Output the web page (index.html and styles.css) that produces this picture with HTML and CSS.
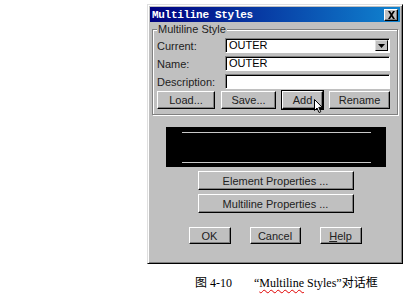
FILE: index.html
```html
<!DOCTYPE html>
<html>
<head>
<meta charset="utf-8">
<link rel="stylesheet" href="styles.css">
</head>
<body>
<div class="page">
  <div class="dialog">
    <div class="titlebar">
      <span class="title">Multiline Styles</span>
      <span class="close">
        <svg width="9" height="8" viewBox="0 0 9 8"><path d="M1 0h2l1.5 2.5L6 0h2L5.5 4 8 8H6L4.5 5.5 3 8H1l2.5-4z" fill="#000"/></svg>
      </span>
    </div>
    <div class="group">
      <div class="legend">Multiline Style</div>
      <div class="row">
        <span class="label">Current:</span>
        <div class="field combo"><span>OUTER</span>
          <span class="drop"><svg width="7" height="4" viewBox="0 0 7 4"><path d="M0 0h7L3.5 4z" fill="#000"/></svg></span>
        </div>
      </div>
      <div class="row">
        <span class="label">Name:</span>
        <div class="field"><span>OUTER</span></div>
      </div>
      <div class="row">
        <span class="label">Description:</span>
        <div class="field"></div>
      </div>
      <div class="btnrow">
        <div class="btn w-load">Load...</div>
        <div class="btn w-save">Save...</div>
        <div class="btn w-add focus">Add
          <svg class="cursor" width="9" height="14" viewBox="0 0 9 14"><path d="M0.5 0.5v11l2.5-2.5 2 4.5 1.8-0.8-2-4.3h3.5z" fill="#fff" stroke="#000" stroke-width="1"/></svg>
        </div>
        <div class="btn w-rename">Rename</div>
      </div>
    </div>
    <div class="preview">
      <div class="pline"></div>
      <div class="pline"></div>
    </div>
    <div class="props">
      <div class="btn wide">Element Properties ...</div>
      <div class="btn wide">Multiline Properties ...</div>
    </div>
    <div class="footer">
      <div class="btn w-ok">OK</div>
      <div class="btn w-cancel">Cancel</div>
      <div class="btn w-help"><u>H</u>elp</div>
    </div>
  </div>
  <div class="caption">图 4-10<span class="gap"></span>“<span class="wavy">Multiline</span> Styles”对话框</div>
</div>
</body>
</html>
```

FILE: styles.css
```css
html, body {
  margin: 0;
  padding: 0;
  background: #fff;
}
.page {
  width: 405px;
  height: 295px;
  padding: 4px 0 0 147px;
  box-sizing: border-box;
  font-family: "Liberation Sans", Arial, sans-serif;
}
.dialog {
  width: 256px;
  height: 260px;
  box-sizing: border-box;
  background: #c0c0c0;
  border-top: 1px solid #dfdfdf;
  border-left: 1px solid #dfdfdf;
  border-right: 1px solid #000;
  border-bottom: 1px solid #000;
  box-shadow: inset 1px 1px 0 #fff, inset -1px -1px 0 #808080;
  padding: 2px;
  display: flex;
  flex-direction: column;
}
.titlebar {
  height: 15px;
  background: linear-gradient(to right, #000080, #1084d0);
  display: flex;
  align-items: center;
  justify-content: space-between;
  padding: 0 2px 0 2px;
}
.title {
  color: #fff;
  font-family: "Liberation Mono", "DejaVu Sans Mono", monospace;
  font-weight: bold;
  font-size: 11px;
  letter-spacing: -0.3px;
}
.close {
  width: 14px;
  height: 12px;
  box-sizing: border-box;
  background: #c0c0c0;
  border-top: 1px solid #fff;
  border-left: 1px solid #fff;
  border-right: 1px solid #000;
  border-bottom: 1px solid #000;
  box-shadow: inset -1px -1px 0 #808080;
  display: flex;
  align-items: center;
  justify-content: center;
}
.group {
  margin: 7px 2px 0 2px;
  height: 86px;
  box-sizing: border-box;
  border: 1px solid #808080;
  box-shadow: 1px 1px 0 #fff, inset 1px 1px 0 #fff;
  position: relative;
  padding: 8px 7px 0 4px;
  display: flex;
  flex-direction: column;
}
.legend {
  position: absolute;
  top: -7px;
  left: 4px;
  background: #c0c0c0;
  padding: 0 1px;
  font-size: 11px;
  color: #222;
  line-height: 12px;
}
.row {
  display: flex;
  align-items: center;
  justify-content: space-between;
  height: 15px;
  margin-bottom: 3px;
}
.label {
  font-size: 11px;
  color: #222;
}
.field {
  width: 165px;
  height: 15px;
  box-sizing: border-box;
  background: #fff;
  border-top: 1px solid #808080;
  border-left: 1px solid #808080;
  border-right: 1px solid #fff;
  border-bottom: 1px solid #fff;
  box-shadow: inset 1px 1px 0 #000;
  font-size: 11px;
  line-height: 13px;
  padding-left: 3px;
  color: #000;
  display: flex;
  justify-content: space-between;
  align-items: center;
}
.drop {
  width: 13px;
  height: 11px;
  margin-right: 1px;
  box-sizing: border-box;
  background: #c0c0c0;
  border-top: 1px solid #dfdfdf;
  border-left: 1px solid #dfdfdf;
  border-right: 1px solid #000;
  border-bottom: 1px solid #000;
  display: flex;
  align-items: center;
  justify-content: center;
}
.btnrow {
  display: flex;
  justify-content: space-between;
  margin-top: -1px;
}
.btn {
  height: 18px;
  box-sizing: border-box;
  background: #c0c0c0;
  border-top: 1px solid #fff;
  border-left: 1px solid #fff;
  border-right: 1px solid #000;
  border-bottom: 1px solid #000;
  box-shadow: inset -1px -1px 0 #808080;
  font-size: 11px;
  color: #222;
  display: flex;
  align-items: center;
  justify-content: center;
  position: relative;
}
.btn.focus {
  outline: 1px solid #000;
}
.cursor {
  position: absolute;
  left: 31px;
  top: 7px;
}
.w-load { width: 58px; }
.w-save { width: 55px; }
.w-add { width: 41px; }
.w-rename { width: 61px; }
.preview {
  margin: 12px 14px 0 16px;
  height: 40px;
  background: #000;
  display: flex;
  flex-direction: column;
  justify-content: space-between;
  padding: 5px 15px 4px 16px;
  box-sizing: border-box;
}
.pline {
  height: 1px;
  background: #c8c8c8;
}
.props {
  display: flex;
  flex-direction: column;
  align-items: center;
  gap: 4px;
  margin-top: 4px;
  padding-left: 0;
}
.btn.wide {
  width: 156px;
  height: 19px;
  margin-left: 1px;
}
.footer {
  display: flex;
  justify-content: center;
  gap: 19px;
  margin-top: 14px;
}
.footer .btn {
  height: 17px;
}
.w-ok { width: 42px; }
.w-cancel { width: 51px; }
.w-help { width: 42px; }
.caption {
  margin: 12px 0 0 48px;
  font-family: "Liberation Serif", "Noto Sans CJK SC", serif;
  font-size: 12px;
  line-height: 14px;
  color: #000;
  white-space: nowrap;
}
.gap {
  display: inline-block;
  width: 22px;
}
.wavy {
  text-decoration: underline wavy #e00000;
  text-decoration-thickness: 1px;
  text-underline-offset: 2px;
}
```
